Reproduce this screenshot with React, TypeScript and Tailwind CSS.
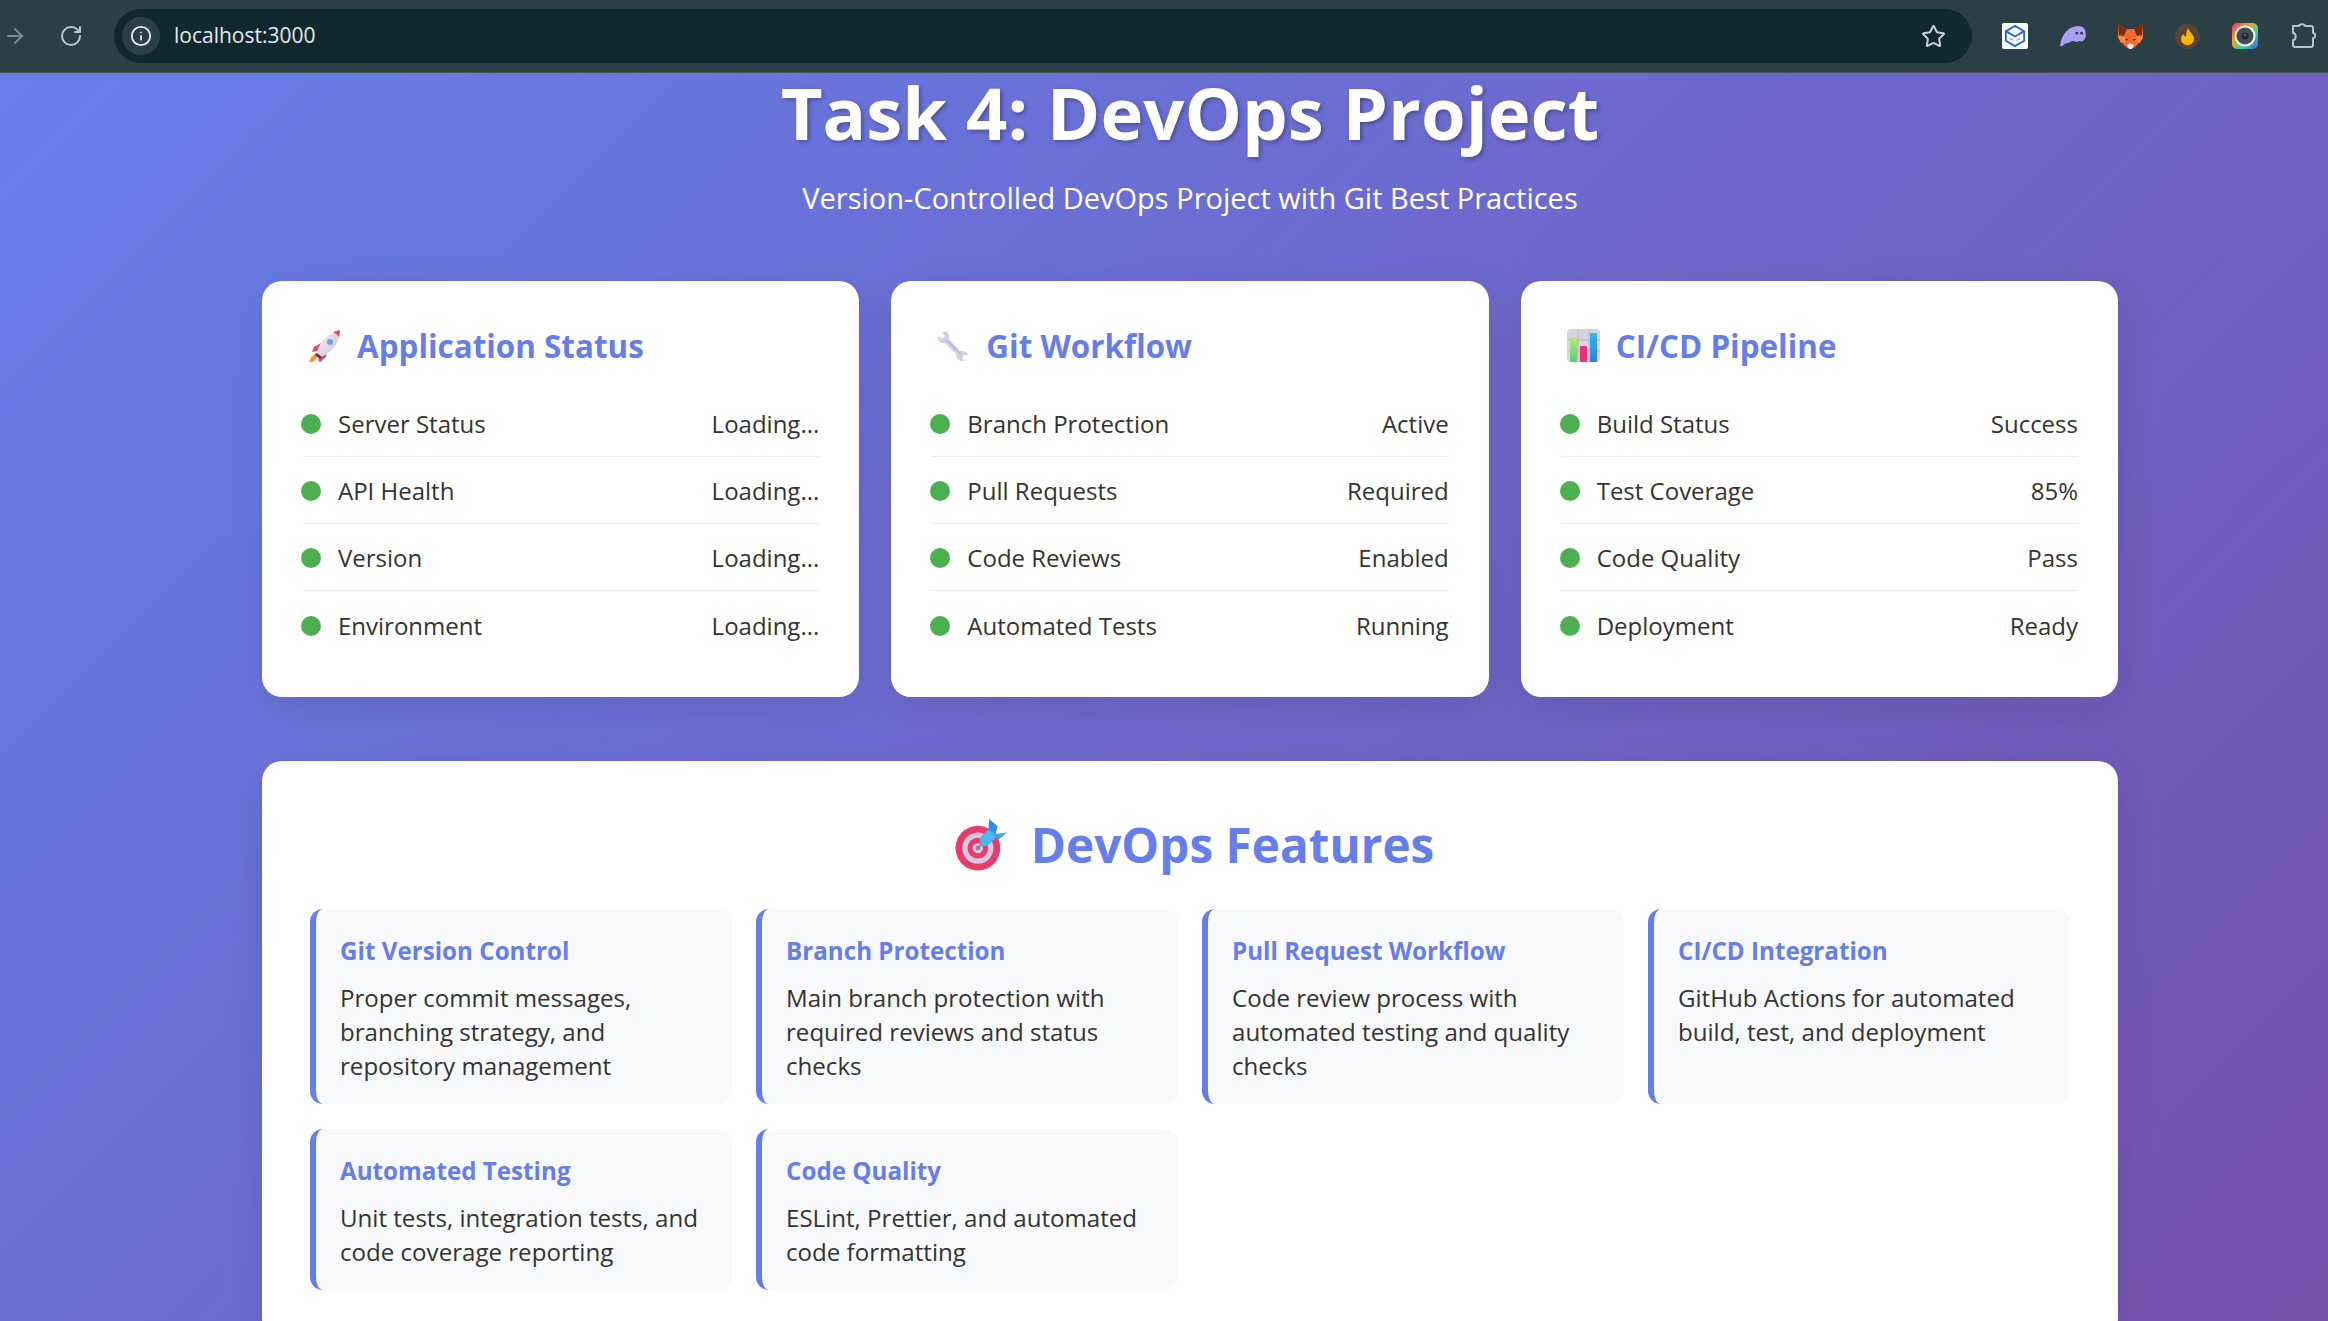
import { ArrowRight, Info, RotateCw, Star } from "lucide-react";
import type { ReactNode } from "react";

const RocketEmoji = () => (
  <svg viewBox="0 0 33 32" className="w-[33px] h-[32px]">
    <defs>
      <linearGradient id="rocketBody" x1="0" y1="0" x2="1" y2="1">
        <stop offset="0" stopColor="#f4eef6" />
        <stop offset="1" stopColor="#cfc4da" />
      </linearGradient>
    </defs>
    <path d="M3 27 L8 23 L10 27 L5 32 L1 32 Z" fill="#f59a3a" />
    <path d="M6 17 L13 13 L12 20 L4 22 Z" fill="#f8386c" />
    <path d="M14 24 L19 20 L18 27 L12 32 L10 30 Z" fill="#f8386c" />
    <path d="M9 23 C10 13 19 4 32 0 C33 11 25 21 14 27 Z" fill="url(#rocketBody)" />
    <path d="M25 2 L32 0 L31 7 C29 4 27 3 25 2 Z" fill="#f8385f" />
    <path d="M9 23 L14 27 L12 29 L7 25 Z" fill="#50366f" />
    <circle cx="22" cy="12" r="4" fill="#d9cde2" />
    <circle cx="22" cy="12" r="2.8" fill="#5aa7ee" />
  </svg>
);

const WrenchEmoji = () => (
  <svg viewBox="0 0 31 30" className="w-[31px] h-[30px]">
    <path
      d="M1 5 L5 8 L8 5 L5 1 C8 -0.5 12 1 12 5 C12 6 12 7 12 8 L23 20 C26 19 30 21 31 24 L27 24 L25 27 L28 30 C23 31 19 28 19 23 L8 12 C4 13 0 10 1 5 Z"
      fill="#d3cee3"
    />
    <path d="M9 9 L24 23" stroke="#bdb6d4" strokeWidth="1.5" />
  </svg>
);

const ChartEmoji = () => (
  <svg viewBox="0 0 33 33" className="w-[33px] h-[33px]">
    <defs>
      <linearGradient id="chartGreen" x1="0" y1="0" x2="0" y2="1">
        <stop offset="0" stopColor="#b8ec70" />
        <stop offset="1" stopColor="#58cc78" />
      </linearGradient>
      <linearGradient id="chartBlue" x1="0" y1="0" x2="0" y2="1">
        <stop offset="0" stopColor="#33b6f5" />
        <stop offset="1" stopColor="#2f7fd8" />
      </linearGradient>
    </defs>
    <rect width="33" height="33" rx="4" fill="#d8d3e0" />
    <path d="M0 11 H33 M0 22 H33 M11 0 V33 M22 0 V33" stroke="#b9b4c4" strokeWidth="1" />
    <rect x="3" y="8" width="7" height="25" rx="1" fill="url(#chartGreen)" />
    <rect x="13" y="17" width="7" height="16" rx="1" fill="#ec2f78" />
    <rect x="23" y="4" width="7" height="29" rx="1" fill="url(#chartBlue)" />
  </svg>
);

const TargetEmoji = () => (
  <svg viewBox="0 0 50 50" className="w-[52px] h-[52px]">
    <circle cx="22" cy="28" r="21.5" fill="#e73b6c" />
    <circle cx="22" cy="28" r="15" fill="#d6c9dd" />
    <circle cx="22" cy="28" r="10" fill="#ec3a72" />
    <circle cx="22" cy="28" r="5" fill="#d6c9dd" />
    <circle cx="22" cy="28" r="2.2" fill="#8f8798" />
    <path d="M22 28 L34 16" stroke="#8f8798" strokeWidth="2" />
    <path d="M25 17 L33 9 L41 16 L32 25 C27 28 22 23 25 17 Z" fill="#4cb8f2" />
    <path d="M32 10 L33 0 L41 7 L39 15 Z" fill="#2f8fe0" />
    <path d="M36 15 L50 13 L42 20 Z" fill="#3aa3ea" />
  </svg>
);

const GhostIcon = () => (
  <svg viewBox="0 0 27 24" className="w-[26px] h-[23px]">
    <path
      d="M0 22 C1 10 9 1 19 1 C24 1 27 4 27 10 C27 15 24 18 21 17 C19 16 18 19 15 17 C12 16 10 19 7 19 C4 19 3 23 0 22 Z"
      fill="#ab9ff2"
    />
    <circle cx="17.5" cy="8.5" r="1.5" fill="#2b3f47" />
    <circle cx="22.5" cy="8.5" r="1.5" fill="#2b3f47" />
  </svg>
);

const FoxIcon = () => (
  <svg viewBox="0 0 25 25" className="w-[25px] h-[25px]">
    <path d="M0 0 L9 5 L16 5 L25 0 L25 14 L20 20 L16 24 L9 24 L5 20 L0 14 Z" fill="#f6682c" />
    <path d="M0 0 L9 5 L6 12 L1 11 Z" fill="#7a2c10" />
    <path d="M25 0 L16 5 L19 12 L24 11 Z" fill="#7a2c10" />
    <path d="M0 13 L6 12 L8 18 L3 19 Z" fill="#fb8a45" />
    <path d="M25 13 L19 12 L17 18 L22 19 Z" fill="#fb8a45" />
    <path d="M9 21 L12.5 19 L16 21 L14 25 L11 25 Z" fill="#ece3da" />
    <path d="M7 15 L10 15 L9 17 Z M18 15 L15 15 L16 17 Z" fill="#3a2418" />
  </svg>
);

const FlameIcon = () => (
  <svg viewBox="0 0 25 25" className="w-[25px] h-[25px]">
    <circle cx="12.5" cy="12.5" r="12.5" fill="#5a4339" />
    <path
      d="M13 4 C14 8 19 10 19 15 C19 18.5 16 21 12.5 21 C9 21 6 18.5 6 15 C6 12.5 7.5 11 8.5 10 C9 12 10 12.5 11 12.5 C11.5 10 11 7 13 4 Z"
      fill="#fbb405"
    />
  </svg>
);

const CameraIcon = () => (
  <svg viewBox="0 0 26 26" className="w-[26px] h-[26px]">
    <defs>
      <linearGradient id="lensRing" x1="0" y1="0" x2="1" y2="1">
        <stop offset="0" stopColor="#ea2f7b" />
        <stop offset="0.35" stopColor="#f2a11f" />
        <stop offset="0.65" stopColor="#38d29a" />
        <stop offset="1" stopColor="#3565e8" />
      </linearGradient>
    </defs>
    <rect width="26" height="26" rx="5" fill="url(#lensRing)" />
    <circle cx="13" cy="13" r="10.5" fill="#f4f6f7" />
    <circle cx="13" cy="13" r="8.5" fill="#454c55" />
    <circle cx="13" cy="13" r="3.5" fill="#1d2a38" />
    <circle cx="13" cy="12" r="1" fill="#5f89a8" />
  </svg>
);

const ExtensionBox = () => (
  <svg viewBox="0 0 27 27" className="w-[26px] h-[26px]">
    <rect width="27" height="27" rx="2" fill="#ffffff" />
    <path d="M13.5 3 L23 8.5 V18.5 L13.5 24 L4 18.5 V8.5 Z" fill="none" stroke="#2563eb" strokeWidth="2" />
    <path d="M4 8.5 L13.5 14 L23 8.5" fill="none" stroke="#2563eb" strokeWidth="2" />
    <path d="M8 16 L12 18 M19 16 L15 18" stroke="#8fa9ef" strokeWidth="1.4" />
  </svg>
);

const PuzzleIcon = () => (
  <svg viewBox="0 0 26 26" fill="none" className="w-[26px] h-[26px]">
    <path
      d="M3 3 H9 C9 0.5 15 0.5 15 3 H21 C22 3 23 4 23 5 V10 C26 10 26 15 23 15 V22 C23 23 22 24 21 24 H5 C4 24 3 23 3 22 V17 C6.5 17 6.5 10 3 10 Z"
      stroke="#b4c4c8"
      strokeWidth="2"
      strokeLinejoin="round"
    />
  </svg>
);

const BrowserBar = () => (
  <div className="flex items-center h-[73px] shrink-0 bg-[#2b3f47] border-b border-[#43535a] pl-[3px] pr-[12px]">
    <ArrowRight className="w-[24px] h-[24px] text-[#7c8c92]" strokeWidth={2} />
    <RotateCw className="ml-[32px] w-[24px] h-[24px] text-[#b9c8cc]" strokeWidth={2} />
    <div className="ml-[31px] flex flex-1 items-center h-[54px] rounded-full bg-[#12282f] pl-[8px] pr-[26px]">
      <div className="flex items-center justify-center w-[38px] h-[38px] rounded-full bg-[#2b3f47]">
        <Info className="w-[22px] h-[22px] text-[#e3e8e9]" strokeWidth={2} />
      </div>
      <span className="ml-[14px] flex-1 text-[21px] text-[#e3e8e9]">localhost:3000</span>
      <Star className="w-[25px] h-[25px] text-[#c4ced1]" strokeWidth={2} />
    </div>
    <div className="ml-[30px] flex items-center gap-[32px]">
      <ExtensionBox />
      <GhostIcon />
      <FoxIcon />
      <FlameIcon />
      <CameraIcon />
      <PuzzleIcon />
    </div>
  </div>
);

interface StatusCardProps {
  icon: ReactNode;
  title: string;
  rows: [string, string][];
}

const StatusCard = ({ icon, title, rows }: StatusCardProps) => (
  <div className="bg-white rounded-[20px] px-[40px] pt-[39px] pb-[39px] shadow-[0_10px_40px_rgba(0,0,0,0.1)]">
    <h2 className="flex items-center h-[51px] mb-[19px] text-[31.4px] font-bold text-[#667eea]">
      <span className="flex items-center w-[55px] pl-[6px]">{icon}</span>
      {title}
    </h2>
    <div>
      {rows.map(([label, value], i) => (
        <div
          key={label}
          className={`flex items-center justify-between h-[67px] pt-[2px] text-[24px] text-[#333333] ${
            i < rows.length - 1 ? "border-b border-[#eeeeee]" : ""
          }`}
        >
          <span className="flex items-center">
            <span className="w-[20px] h-[20px] rounded-full bg-[#4caf50] mr-[17px] -ml-[1px]" />
            {label}
          </span>
          <span>{value}</span>
        </div>
      ))}
    </div>
  </div>
);

const cards: StatusCardProps[] = [
  {
    icon: <RocketEmoji />,
    title: "Application Status",
    rows: [
      ["Server Status", "Loading..."],
      ["API Health", "Loading..."],
      ["Version", "Loading..."],
      ["Environment", "Loading..."],
    ],
  },
  {
    icon: <WrenchEmoji />,
    title: "Git Workflow",
    rows: [
      ["Branch Protection", "Active"],
      ["Pull Requests", "Required"],
      ["Code Reviews", "Enabled"],
      ["Automated Tests", "Running"],
    ],
  },
  {
    icon: <ChartEmoji />,
    title: "CI/CD Pipeline",
    rows: [
      ["Build Status", "Success"],
      ["Test Coverage", "85%"],
      ["Code Quality", "Pass"],
      ["Deployment", "Ready"],
    ],
  },
];

const features: [string, string][] = [
  ["Git Version Control", "Proper commit messages, branching strategy, and repository management"],
  ["Branch Protection", "Main branch protection with required reviews and status checks"],
  ["Pull Request Workflow", "Code review process with automated testing and quality checks"],
  ["CI/CD Integration", "GitHub Actions for automated build, test, and deployment"],
  ["Automated Testing", "Unit tests, integration tests, and code coverage reporting"],
  ["Code Quality", "ESLint, Prettier, and automated code formatting"],
];

export default function App() {
  return (
    <div className="flex flex-col h-screen overflow-hidden font-['Open_Sans',sans-serif]">
      <BrowserBar />
      <main className="flex-1 bg-[linear-gradient(135deg,#667eea_0%,#764ba2_115%)] pl-[262px] pr-[210px]">
        <header className="text-center text-white">
          <h1 className="h-[79px] leading-[79px] text-[72.4px] font-bold [text-shadow:2px_2px_4px_rgba(0,0,0,0.3)]">
            Task 4: DevOps Project
          </h1>
          <p className="mt-[24px] h-[44px] leading-[44px] text-[29px]">
            Version-Controlled DevOps Project with Git Best Practices
          </p>
        </header>

        <div className="grid grid-cols-3 gap-[32px] mt-[61px]">
          {cards.map((card) => (
            <StatusCard key={card.title} {...card} />
          ))}
        </div>

        <section className="mt-[64px] bg-white rounded-[20px] px-[48px] pt-[50px] pb-[48px] shadow-[0_10px_40px_rgba(0,0,0,0.1)]">
          <h2 className="flex items-center justify-center h-[68px] mb-[30px] pl-[9px] text-[47.7px] font-bold text-[#667eea]">
            <span className="mr-[24px]">
              <TargetEmoji />
            </span>
            DevOps Features
          </h2>
          <div className="grid grid-cols-4 gap-x-[24px] gap-y-[25px]">
            {features.map(([title, text]) => (
              <div
                key={title}
                className="bg-[#f8f9fa] rounded-[13px] border-l-[6px] border-[#667eea] pl-[24px] pr-[20px] py-[21px]"
              >
                <h3 className="mb-[10px] text-[24.2px] leading-[41px] font-bold text-[#667eea]">{title}</h3>
                <p className="text-[24.1px] leading-[34px] text-[#333333]">{text}</p>
              </div>
            ))}
          </div>
        </section>
      </main>
    </div>
  );
}
